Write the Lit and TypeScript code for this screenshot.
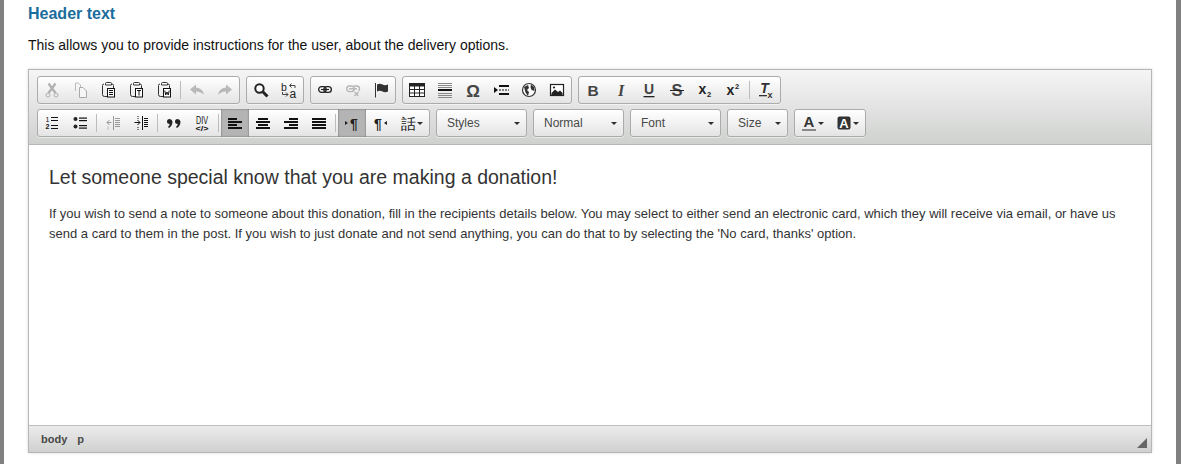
import { LitElement, html, css, svg, TemplateResult } from "lit";
import { customElement } from "lit/decorators.js";

const ic = (body: unknown, cls = "") => html`<svg class="ic ${cls}" width="16" height="16" viewBox="0 0 16 16">${body}</svg>`;

const clip = (inner: unknown) => svg`
  <path d="M2.500 3.500V12.500Q2.500 14.500 4.500 14.500H7M13.500 6V3.500Q13.500 2 12 2M4 2Q2.500 2 2.500 3.500" fill="none" stroke="#333"/>
  <path d="M5.500 3V1.500Q5.500 0.500 6.500 0.500H10.500Q11.500 0.500 11.500 1.500V3Z" fill="#fff" stroke="#333"/>
  <rect x="7.500" y="6.500" width="7" height="8.500" fill="#fff" stroke="#111"/>
  ${inner}`;

const lines = (arr: [number, number, number, number?][]) =>
  svg`${arr.map(([x, y, w, h]) => svg`<rect x="${x}" y="${y}" width="${w}" height="${h ?? 1}" fill="#111"/>`)}`;

const ICONS: Record<string, () => TemplateResult> = {
  cut: () => ic(svg`<g fill="none" stroke="#b0b0b0"><path d="M4.500 11L11.500 1.500M11.500 11L4.500 1.500" stroke-width="2.200"/><circle cx="4" cy="13" r="2"/><circle cx="12" cy="13" r="2"/></g>`),
  copy: () => ic(svg`<path d="M3.500 9V1H6.500L8.500 3V5" fill="none" stroke="#bbb"/><path d="M7.500 5.500H11L14.500 9V15.500H7.500Z" fill="#f6f6f6" stroke="#aaa"/>`),
  paste: () => ic(clip(lines([[9, 8, 4], [9, 10, 4], [9, 12, 4]]))),
  pastetext: () => ic(clip(svg`<path d="M9 8.500H13M11 8.500V13.500" stroke="#111" fill="none"/>`)),
  pasteword: () => ic(clip(svg`<path d="M8.800 8.500L9.700 13L11 10L12.300 13L13.200 8.500" stroke="#111" fill="none"/>`)),
  undo: () => ic(svg`<path d="M1 7.500L7 2.500V5.500Q14 6 15 13Q12 9.500 7 9.500V12.500Z" fill="#b8b8b8"/>`),
  redo: () => ic(svg`<path d="M15 7.500L9 2.500V5.500Q2 6 1 13Q4 9.500 9 9.500V12.500Z" fill="#b8b8b8"/>`),
  find: () => ic(svg`<circle cx="6.500" cy="6.500" r="4.200" fill="#fff" stroke="#222" stroke-width="2"/><path d="M9.800 9.800L14.500 14.500" stroke="#222" stroke-width="3"/>`),
  replace: () => ic(svg`<text class="gl" x="0" y="9" font-size="10.500" fill="#222">b</text><text class="gl" x="8.500" y="15.500" font-size="12" fill="#222">a</text><path d="M14 6V3.500H8.500M10.500 1.500L8.500 3.500L10.500 5.500M1.500 10V12.500H7M5 10.500L7 12.500L5 14.500" fill="none" stroke="#444"/>`),
  link: () => ic(svg`<g fill="none" stroke="#222" stroke-width="1.300"><rect x="1.650" y="4.650" width="7.500" height="5.700" rx="2.850"/><rect x="6.850" y="4.650" width="7.500" height="5.700" rx="2.850"/></g><path d="M4 7.500H12" stroke="#222" stroke-width="1.100"/>`),
  unlink: () => ic(svg`<g fill="none" stroke="#b5b5b5" stroke-width="1.400"><rect x="1.700" y="4" width="7.500" height="5.600" rx="2.800"/><path d="M9 4H12Q14.500 4 14.500 6.800Q14.500 8.500 13.500 9"/><path d="M4 6.800H12" /></g><path d="M9.500 10L13.500 14M13.500 10L9.500 14" stroke="#b5b5b5" stroke-width="1.300"/>`),
  anchor: () => ic(svg`<path d="M2.500 1V15.500" stroke="#333"/><path d="M4 2.500Q7 1 9.500 2.500T15 2.500V9.500Q12 11 9.500 9.500T4 9.500Z" fill="#333"/>`),
  table: () => ic(svg`<rect x="0.500" y="1.500" width="15" height="13" fill="#fff" stroke="#222"/><rect x="0" y="1" width="16" height="3.500" fill="#222"/><path d="M5.500 4V15M10.500 4V15M1 7.500H15M1 11H15" stroke="#222"/>`),
  hr: () => ic(svg`<path d="M1 1.500H15M1 3.500H15M1 5.500H15M1 11.500H15M1 13.500H15M1 15.500H15" stroke="#888"/><rect x="1" y="7" width="14" height="2" fill="#111"/>`),
  omega: () => ic(svg`<text class="gl" x="8" y="14.500" text-anchor="middle" font-size="17" font-weight="700" fill="#444">Ω</text>`),
  pagebreak: () => ic(svg`<path d="M1 5V11L5 8Z" fill="#111"/><rect x="6" y="3" width="10" height="2" fill="#111"/><path d="M6 8H16" stroke="#111" stroke-dasharray="2 1"/><rect x="6" y="11" width="10" height="2" fill="#111"/>`),
  iframe: () => ic(svg`<circle cx="8" cy="8" r="6.500" fill="#fff" stroke="#333" stroke-width="1.200"/><path d="M3 5L7 3L8 6L6 8L8 10L7 14L4.500 10.500ZM10 2.500L13 5L13.500 9L10.500 8L9.500 5Z" fill="#333"/>`),
  image: () => ic(svg`<rect x="1.500" y="2.500" width="13" height="11" fill="#fff" stroke="#222" stroke-width="1.200"/><path d="M2.500 13V11L6 7.500L9 10L11 8.500L13.500 11V13Z" fill="#222"/><circle cx="5" cy="5.500" r="1.100" fill="#222"/>`),
  bold: () => ic(svg`<text class="gl" x="8" y="13.500" text-anchor="middle" font-size="15.500" font-weight="700" fill="#444">B</text>`),
  italic: () => ic(svg`<text class="gls" x="8" y="13.500" text-anchor="middle" font-size="16" font-weight="700" font-style="italic" fill="#444">I</text>`),
  underline: () => ic(svg`<text class="gl" x="8" y="12" text-anchor="middle" font-size="14" font-weight="700" fill="#444">U</text><rect x="2.500" y="14" width="11" height="1.300" fill="#222"/>`),
  strike: () => ic(svg`<text class="gl" x="8" y="13.800" text-anchor="middle" font-size="16.500" font-weight="700" fill="#444">S</text><rect x="1" y="8" width="14" height="1" fill="#222"/>`),
  sub: () => ic(svg`<text class="gl" x="1.500" y="12" font-size="14" font-weight="700" fill="#222">x</text><text class="gl" x="10" y="15" font-size="7.500" font-weight="700" fill="#222">2</text>`),
  sup: () => ic(svg`<text class="gl" x="1.500" y="13" font-size="14" font-weight="700" fill="#222">x</text><text class="gl" x="10" y="7" font-size="7.500" font-weight="700" fill="#222">2</text>`),
  clear: () => ic(svg`<text class="gl" x="6.500" y="11" text-anchor="middle" font-size="14" font-weight="700" font-style="italic" fill="#333">T</text><rect x="1" y="13" width="8" height="1.300" fill="#333"/><text class="gl" x="9.500" y="15.500" font-size="9" font-weight="700" fill="#333">x</text>`),
  ol: () => ic(svg`<text class="gl" x="1.500" y="7" font-size="7" fill="#111">1</text><text class="gl" x="1.500" y="14" font-size="7" font-weight="700" fill="#111">2</text>${lines([[7, 2, 7], [7, 5, 7], [7, 10, 7], [7, 13, 7]])}`),
  ul: () => ic(svg`<circle cx="3.500" cy="4" r="2" fill="#222"/><circle cx="3.500" cy="11.500" r="2" fill="#222"/>${lines([[7, 2.500, 8, 1.200], [7, 5, 8, 1.200], [7, 10, 8, 1.200], [7, 12.500, 8, 1.200]])}`),
  outdent: () => ic(svg`<g opacity=".4">${lines([[8, 1, 1, 14], [10, 3, 5], [10, 5, 5], [10, 7, 5], [10, 9, 5], [10, 11, 5]])}<path d="M6.500 7.500H2M4.500 5L2 7.500L4.500 10" fill="none" stroke="#111"/><path d="M3 11.500V15" stroke="#111" stroke-dasharray="1 1"/></g>`),
  indent: () => ic(svg`${lines([[9, 1, 1, 14], [11, 3, 4], [11, 5, 4], [11, 7, 4], [11, 9, 4], [11, 11, 4]])}<path d="M1.500 7.500H7M4.500 5L7 7.500L4.500 10" fill="none" stroke="#111"/><path d="M5 1V4M5 12V15" stroke="#111" stroke-dasharray="1 1"/>`),
  quote: () => ic(svg`<g fill="#222"><path d="M1 6.500Q1 4 3.500 4T6.500 6.500Q6.500 10.500 3 13L2 12Q3.500 10.700 3.800 9Q1 9 1 6.500Z"/><path d="M9 6.500Q9 4 11.500 4T14.500 6.500Q14.500 10.500 11 13L10 12Q11.500 10.700 11.800 9Q9 9 9 6.500Z"/></g>`),
  div: () => ic(svg`<text class="gl" x="8" y="8.500" text-anchor="middle" font-size="10" fill="#111" textLength="12" lengthAdjust="spacingAndGlyphs">DIV</text><text class="gl" x="8" y="15.500" text-anchor="middle" font-size="8" font-weight="700" fill="#111" textLength="13" lengthAdjust="spacingAndGlyphs">&lt;/&gt;</text>`),
  left: () => ic(lines([[1, 3, 9, 2], [1, 6, 14, 2], [1, 9, 9, 2], [1, 12, 14, 2]])),
  center: () => ic(lines([[3, 3, 10, 2], [1, 6, 14, 2], [3, 9, 10, 2], [1, 12, 14, 2]])),
  right: () => ic(lines([[6, 3, 9, 2], [1, 6, 14, 2], [6, 9, 9, 2], [1, 12, 14, 2]])),
  justify: () => ic(lines([[1, 3, 14, 2], [1, 6, 14, 2], [1, 9, 14, 2], [1, 12, 14, 2]])),
  ltr: () => ic(svg`<path d="M1 6V10L4 8Z" fill="#222"/><text class="gl" x="10" y="13.500" text-anchor="middle" font-size="14" font-weight="700" fill="#222">¶</text>`),
  rtl: () => ic(svg`<text class="gl" x="6" y="13.500" text-anchor="middle" font-size="14" font-weight="700" fill="#222">¶</text><path d="M15 6V10L12 8Z" fill="#222"/>`),
  lang: () => ic(svg`<text class="gl" x="8" y="14" text-anchor="middle" font-size="15" fill="#222" font-family="'Noto Sans CJK TC'">話</text>`),
  fore: () => ic(svg`<text class="gl" x="8" y="12" text-anchor="middle" font-size="15" font-weight="700" fill="#333">A</text><rect x="1" y="14" width="14" height="2" fill="#888"/>`),
  back: () => ic(svg`<rect x="1.500" y="1.500" width="13" height="13" rx="2" fill="#333"/><text class="gl" x="8" y="13" text-anchor="middle" font-size="13" font-weight="700" fill="#fff">A</text>`),
};

type Item = string;
const R1: Item[][] = [
  ["cut", "copy", "paste", "pastetext", "pasteword", "|", "undo", "redo"],
  ["find", "replace"],
  ["link", "unlink", "anchor"],
  ["table", "hr", "omega", "pagebreak", "iframe", "image"],
  ["bold", "italic", "underline", "strike", "sub", "sup", "|", "clear"],
];
const R2A: Item[] = ["ol", "ul", "|", "outdent", "indent", "|", "quote", "div", "|", "left*", "center", "right", "justify", "|", "ltr*", "rtl", "lang>"];
const COMBOS: [string, string][] = [["Styles", "wide"], ["Normal", "wide"], ["Font", "wide"], ["Size", "narrow"]];

@customElement("app-root")
export class AppRoot extends LitElement {
  static styles = css`
    :host {
      display: block;
      box-sizing: border-box;
      height: 464px;
      overflow: hidden;
      background: #fff;
      border-left: 4px solid #808080;
      border-right: 5px solid #808080;
      padding: 0 24px;
      font-family: "Liberation Sans", Arial, sans-serif;
    }
    .title {
      margin: 0;
      padding-top: 4px;
      height: 26px;
      box-sizing: border-box;
      font-size: 16px;
      line-height: 19px;
      font-weight: 700;
      color: #1a6c9c;
    }
    .hint {
      margin: 0;
      padding-top: 11px;
      height: 43px;
      box-sizing: border-box;
      font-size: 14px;
      line-height: 16px;
      color: #111;
    }
    .editor {
      display: flex;
      flex-direction: column;
      box-sizing: border-box;
      height: 384px;
      border: 1px solid #b6b6b6;
      box-shadow: 0 0 3px rgba(0, 0, 0, 0.15);
    }
    .top {
      box-sizing: border-box;
      height: 75px;
      padding: 6px 8px 0;
      border-bottom: 1px solid #b6b6b6;
      background: linear-gradient(#f5f5f5, #cfd1cf);
    }
    .row {
      display: flex;
      gap: 6px;
      height: 28px;
      margin-bottom: 5px;
    }
    .grp {
      display: flex;
      box-sizing: border-box;
      height: 28px;
      border: 1px solid #ababab;
      border-radius: 3px;
      background: linear-gradient(#fff, #e4e4e4);
      box-shadow: 0 1px 0 rgba(255, 255, 255, 0.5);
    }
    .btn {
      display: flex;
      align-items: center;
      justify-content: center;
      width: 28px;
      height: 26px;
    }
    .btn.on {
      height: 28px;
      margin-top: -1px;
      background: #b4b4b4;
      box-shadow: inset 0 0 2px rgba(0, 0, 0, 0.5);
    }
    .btn.drop {
      width: 35px;
      justify-content: flex-start;
      padding-left: 6px;
      box-sizing: border-box;
      gap: 1px;
    }
    .swatch {
      width: 35px;
      justify-content: flex-start;
      padding-left: 6px;
      box-sizing: border-box;
      gap: 1px;
    }
    .sep {
      width: 1px;
      height: 18px;
      margin: 4px 2px 0;
      background: #bcbcbc;
    }
    .ic {
      display: block;
      flex: none;
      overflow: visible;
    }
    .gl {
      font-family: "Liberation Sans", Arial, sans-serif;
    }
    .gls {
      font-family: "Liberation Serif", serif;
    }
    .tri {
      width: 0;
      height: 0;
      flex: none;
      border-left: 3px solid transparent;
      border-right: 3px solid transparent;
      border-top: 3px solid #2f2f2f;
    }
    .combo {
      display: flex;
      align-items: center;
      justify-content: space-between;
      box-sizing: border-box;
      padding: 0 6px 0 10px;
      color: #484848;
      font-size: 12px;
    }
    .combo.wide {
      width: 91px;
    }
    .combo.narrow {
      width: 61px;
    }
    .body {
      flex: 1;
      padding: 0 20px;
      background: #fff;
      color: #333;
    }
    .body h2 {
      margin: 0;
      padding-top: 21px;
      font-size: 19.5px;
      line-height: 22px;
      font-weight: 400;
    }
    .body p {
      margin: 0;
      padding-top: 16px;
      font-size: 13px;
      line-height: 20px;
    }
    .status {
      display: flex;
      align-items: center;
      box-sizing: border-box;
      height: 27px;
      padding: 0 4px 0 12px;
      border-top: 1px solid #bfbfbf;
      background: linear-gradient(#ebebeb, #cfd1cf);
      color: #484848;
      font-size: 11px;
      font-weight: 700;
      gap: 10px;
    }
    .grip {
      margin: 8px 0 0 auto;
    }
  `;

  private btn(name: string) {
    if (name === "|") return html`<span class="sep"></span>`;
    const on = name.endsWith("*");
    const drop = name.endsWith(">");
    const key = name.replace(/[*>]$/, "");
    return html`<span class="btn ${on ? "on" : ""} ${drop ? "drop" : ""}">${ICONS[key]()}${drop ? html`<i class="tri"></i>` : ""}</span>`;
  }

  render() {
    return html`
      <h1 class="title">Header text</h1>
      <p class="hint">This allows you to provide instructions for the user, about the delivery options.</p>
      <div class="editor">
        <div class="top">
          <div class="row">${R1.map((g) => html`<div class="grp">${g.map((n) => this.btn(n))}</div>`)}</div>
          <div class="row">
            <div class="grp">${R2A.map((n) => this.btn(n))}</div>
            ${COMBOS.map(([t, c]) => html`<div class="grp combo ${c}"><span>${t}</span><i class="tri"></i></div>`)}
            <div class="grp">
              <span class="btn swatch">${ICONS.fore()}<i class="tri"></i></span>
              <span class="btn swatch">${ICONS.back()}<i class="tri"></i></span>
            </div>
          </div>
        </div>
        <div class="body">
          <h2>Let someone special know that you are making a donation!</h2>
          <p>If you wish to send a note to someone about this donation, fill in the recipients details below. You may select to either send an electronic card, which they will receive via email, or have us send a card to them in the post. If you wish to just donate and not send anything, you can do that to by selecting the 'No card, thanks' option.</p>
        </div>
        <div class="status">
          <span>body</span><span>p</span>
          <svg class="grip" width="10" height="10" viewBox="0 0 10 10"><path d="M0 10L10 0V10Z" fill="#666"/></svg>
        </div>
      </div>
    `;
  }
}
